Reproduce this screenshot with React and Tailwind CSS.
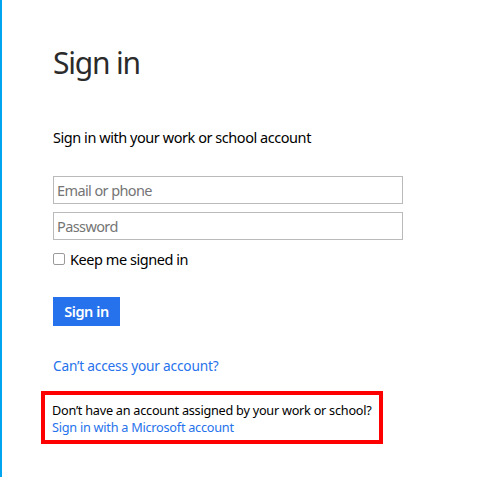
const App = () => {
  return (
    <div
      className="min-h-[477px] w-[500px] border-l-2 border-[#00a4ef] bg-white pl-[51px] pt-[44px] text-[#000]"
      style={{ fontFamily: '"Noto Sans", Tahoma, sans-serif' }}
    >
      <h1 className="text-[30px] leading-[38px] tracking-[-1.2px] text-[#2b2b2b]">Sign in</h1>

      <p className="mt-[45px] text-[14.5px] leading-[20px] tracking-[-0.45px]">Sign in with your work or school account</p>

      <div className="mt-[29px] flex w-[350px] flex-col gap-[8px]">
        <input
          type="text"
          placeholder="Email or phone"
          className="h-[28px] border border-[#bababa] px-[3px] text-[14.5px] tracking-[-0.6px] text-black outline-none placeholder:text-[#757575]"
        />
        <input
          type="password"
          placeholder="Password"
          className="h-[28px] border border-[#bababa] px-[3px] text-[14.5px] tracking-[-0.6px] text-black outline-none placeholder:text-[#757575]"
        />
      </div>

      <label className="mt-[9px] flex items-center gap-[5px] text-[14.5px] leading-[20px] tracking-[-0.45px]">
        <span className="h-[12px] w-[12px] rounded-[2px] border border-[#9a9a9a] bg-white" />
        Keep me signed in
      </label>

      <button
        type="button"
        className="mt-[28px] h-[29px] w-[67px] bg-[#2672ec] text-[14.5px] font-semibold tracking-[-0.4px] text-white"
      >
        Sign in
      </button>

      <p className="mt-[31px] text-[13.7px] leading-[18px] tracking-[-0.2px] text-[#2672ec]">Can’t access your account?</p>

      <div className="-ml-[12px] mt-[16px] w-[342px] border-[4px] border-[#ff0000] pb-[4px] pl-[7px] pt-[7px] text-[12.7px] leading-[17px] tracking-[-0.25px]">
        <p className="whitespace-nowrap text-black">Don’t have an account assigned by your work or school?</p>
        <p className="text-[#2672ec]">Sign in with a Microsoft account</p>
      </div>
    </div>
  );
};

export default App;
